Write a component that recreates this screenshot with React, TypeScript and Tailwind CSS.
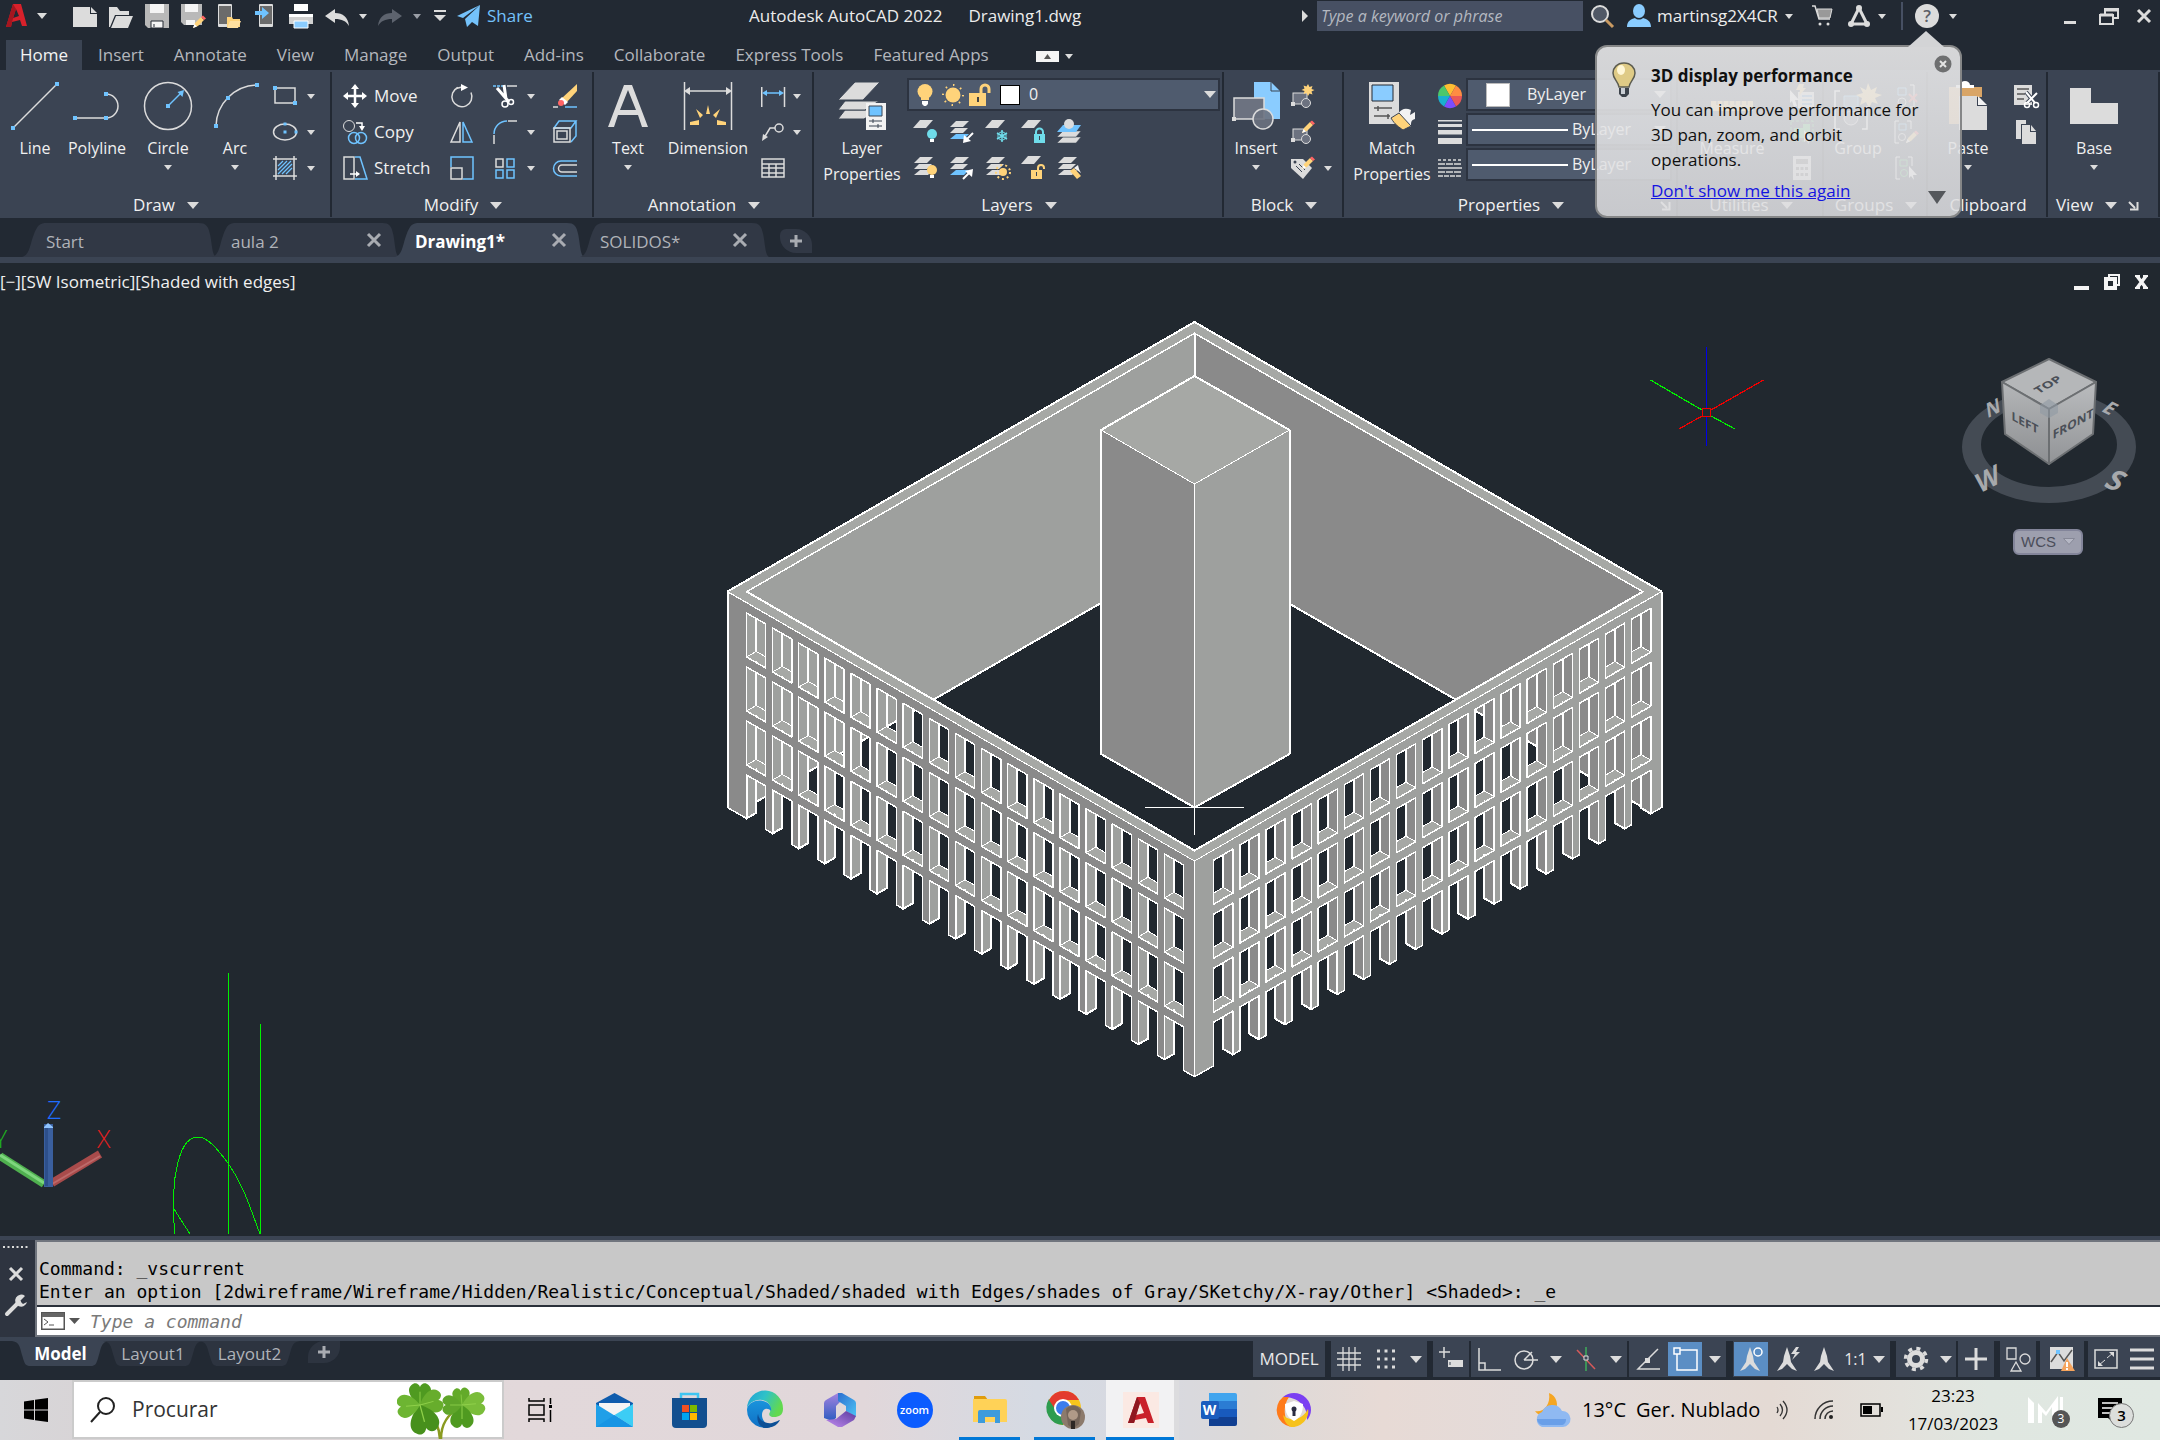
import React from "react";

type Kids = { children?: React.ReactNode };

const W = "#dcdcdc";
const B = "#6fc3ff";
const Y = "#ffd37a";
const C = "#6fdcea";

function Svg({ w = 24, h = 24, vb, label, children }: Kids & { w?: number; h?: number; vb?: string; label?: string }) {
  return (
    <svg width={w} height={h} viewBox={vb ?? `0 0 ${w} ${h}`} fill="none" className="block shrink-0 overflow-visible" aria-label={label} aria-hidden={label ? undefined : true}>
      {children}
    </svg>
  );
}

const Caret = () => (
  <Svg w={8} h={5}>
    <path d="M0 0h8L4 5z" fill={W} />
  </Svg>
);
const CaretLg = () => (
  <Svg w={12} h={7}>
    <path d="M0 0h12L6 7z" fill={W} />
  </Svg>
);

/* ---------- ribbon building blocks ---------- */

function Panel({ className, label, arrow = true, corner = false, children }: Kids & { className: string; label: string; arrow?: boolean; corner?: boolean }) {
  return (
    <section className={`relative flex shrink-0 flex-col pt-2 ${className}`}>
      <div className="flex h-[108px]">{children}</div>
      <div className="flex h-8 items-center justify-center gap-3 pt-1.5">
        <button className="flex items-center gap-[12px] text-[17px] leading-6">
          {label}
          {arrow && <CaretLg />}
        </button>
        {corner && (
          <button aria-label={`${label} settings`} className={label === "Properties" ? "absolute right-2" : "mr-3.5"}>
            <Corner />
          </button>
        )}
      </div>
      <div className="absolute top-0.5 right-0 bottom-px w-0.5 bg-[#222933]" />
    </section>
  );
}

const Corner = () => (
  <Svg w={9} h={9}>
    <path d="M0 1l6 6M8.500 1v7.500H1" stroke={W} strokeWidth="2" />
  </Svg>
);

function Big({ className, label, icon, arrow = false }: { className: string; label: string; icon: React.ReactNode; arrow?: boolean }) {
  return (
    <button className={`flex shrink-0 flex-col items-center pt-1 ${className}`}>
      <span className="flex h-[48px] items-center justify-center">{icon}</span>
      <span className="mt-[5px] text-[16px] leading-[26px]">{label}</span>
      {arrow && (
        <span className="mt-1">
          <Caret />
        </span>
      )}
    </button>
  );
}

function Cell({ label, className = "justify-center", children }: Kids & { label: string; className?: string }) {
  return (
    <button aria-label={label} className={`flex h-9 items-center ${className}`}>
      {children}
    </button>
  );
}

const Sq = ({ x, y, s = 4 }: { x: number; y: number; s?: number }) => <rect x={x - s / 2} y={y - s / 2} width={s} height={s} fill={B} />;

/* ---------- layer icons ---------- */

const Sheet = ({ y, c = W }: { y: number; c?: string }) => <path d={`M7 ${y}h13l-7 8H0z`} fill={c} />;
const Stack = ({ c3 = W }: { c3?: string }) => (
  <>
    <path d="M7 15h13l-5 5H1z" fill={c3} />
    <path d="M6 9h13l-5 5H1z" fill={W} />
    <path d="M7 2h13l-6 6H1z" fill={W} />
  </>
);
const MiniBulb = ({ c }: { c: string }) => (
  <>
    <circle cx="19" cy="15" r="5" fill={c} />
    <path d="M17 20h4v3h-4z" fill="#fff" />
  </>
);

function Pencil({ x, y }: { x: number; y: number }) {
  return (
    <g transform={`translate(${x} ${y})`}>
      <path d="M0 12l2-5 6-6 3 3-6 6z" fill={Y} />
      <path d="M0 12l1.500-4 2.500 2.500z" fill="#fff" />
      <path d="M8 1l2-1.500 3 3L11 4z" fill="#ff6464" />
    </g>
  );
}

const SmallBlock = () => (
  <>
    <rect x="2" y="9" width="14" height="11" fill="#6c7280" stroke={W} />
    <rect x="0" y="18" width="4" height="4" fill={W} />
    <circle cx="15" cy="19" r="4.500" fill="#6c7280" stroke={W} />
  </>
);

/* ---------- title bar ---------- */

function TitleButton({ label, className = "w-9", children }: Kids & { label: string; className?: string }) {
  return (
    <button aria-label={label} className={`flex h-8 shrink-0 items-center justify-center ${className}`}>
      {children}
    </button>
  );
}

function TitleBar() {
  return (
    <header className="flex h-8 items-center bg-[#222933] text-[17px] text-[#ececec]">
      <div className="flex w-[749px] shrink-0 items-center">
        <TitleButton label="Application menu" className="w-[34px]">
          <Svg w={22} h={26}>
            <path d="M7 1h8l6 22h-5l-2-6-8 2-1 5H0z" fill="#d8212b" />
            <path d="M10 6l-3 9 6-2z" fill="#222933" />
            <path d="M7 1l3 5-4 13-1 5H0z" fill="#a5161f" />
          </Svg>
        </TitleButton>
        <TitleButton label="Menu options" className="mr-[18px] w-[15px]">
          <Svg w={10} h={6}>
            <path d="M0 0h10L5 6z" fill={W} />
          </Svg>
        </TitleButton>
        <TitleButton label="New">
          <Svg>
            <path d="M0 3h17v7h7v13H0z" fill={W} />
            <path d="M18 3l6 6h-6z" fill={W} />
          </Svg>
        </TitleButton>
        <TitleButton label="Open">
          <Svg>
            <path d="M0 3h8l3 4h9v4H6L1 23H0z" fill={W} />
            <path d="M7 12h17l-5 12H2z" fill={W} />
          </Svg>
        </TitleButton>
        <TitleButton label="Save">
          <Svg>
            <path d="M0 0h24v24H3l-3-3z" fill="#b9b9b9" />
            <path d="M5 0h14v9H5zM6 17h12v7H6z" fill="#f4f4f4" />
            <path d="M6 17h12v7H6zM9 20v3" stroke="#222933" />
          </Svg>
        </TitleButton>
        <TitleButton label="Save as">
          <Svg>
            <path d="M0 0h21v21H3l-3-3z" fill="#b9b9b9" />
            <path d="M4 0h13v8H4zM5 16h9v5H5z" fill="#f4f4f4" />
            <Pencil x={12} y={12} />
          </Svg>
        </TitleButton>
        <TitleButton label="Open from web">
          <Svg>
            <rect x="1" y="0" width="14" height="23" rx="1" fill={W} />
            <rect x="2" y="2" width="12" height="18" fill="#6b6b6b" />
            <path d="M10 13h5l1 2h7v8H10z" fill={Y} />
            <path d="M13 17h11l-3 7H10z" fill="#ffe0a0" />
          </Svg>
        </TitleButton>
        <TitleButton label="Save to web">
          <Svg>
            <rect x="6" y="0" width="14" height="23" rx="1" fill={W} />
            <rect x="7" y="2" width="12" height="18" fill="#6b6b6b" />
            <path d="M2 7h7V3l7 6-7 6v-4H2z" fill={B} />
          </Svg>
        </TitleButton>
        <TitleButton label="Plot">
          <Svg>
            <path d="M5 0h14v7H5zM0 10h24v10H0z" fill="#fff" />
            <path d="M0 13h24v7H0z" fill="#d0d0d0" />
            <path d="M5 17h14v7H5z" fill="#8accff" stroke="#fff" />
          </Svg>
        </TitleButton>
        <TitleButton label="Undo">
          <Svg>
            <path d="M0 12l10-7v4c8 0 13 4 14 13-3-5-7-7-14-7v4z" fill={W} />
          </Svg>
        </TitleButton>
        <TitleButton label="Undo list" className="w-4">
          <Caret />
        </TitleButton>
        <TitleButton label="Redo" className="w-[38px]">
          <Svg>
            <path d="M24 12L14 5v4C6 9 1 13 0 22c3-5 7-7 14-7v4z" fill="#5d636e" />
          </Svg>
        </TitleButton>
        <TitleButton label="Redo list" className="w-4">
          <Svg w={8} h={5}>
            <path d="M0 0h8L4 5z" fill="#9a9ea6" />
          </Svg>
        </TitleButton>
        <TitleButton label="Customize toolbar" className="w-[30px]">
          <Svg w={12} h={12}>
            <path d="M0 0h12v2H0zM0 5h12l-6 6z" fill={W} />
          </Svg>
        </TitleButton>
        <button className="ml-0.5 flex items-center gap-1.5 text-[#74c2fb]">
          <Svg>
            <path d="M0 12L23 1 6 14zM8 15L23 1l-2 21-6-4-5 5z" fill="#74c2fb" />
          </Svg>
          Share
        </button>
      </div>
      <h1 className="flex-1 whitespace-pre">
        Autodesk AutoCAD 2022<span className="ml-[26px]">Drawing1.dwg</span>
      </h1>
      <div className="flex shrink-0 items-center">
        <TitleButton label="Expand search" className="w-6">
          <Svg w={6} h={12}>
            <path d="M0 0l6 6-6 6z" fill={W} />
          </Svg>
        </TitleButton>
        <input aria-label="Search help" placeholder="Type a keyword or phrase" className="h-[30px] w-[266px] bg-[#475063] px-1 text-[16px] italic outline-none placeholder:text-[#b4b8c0]" />
        <TitleButton label="Search" className="w-[38px]">
          <Svg>
            <circle cx="10" cy="10" r="8" fill="#505866" stroke={W} strokeWidth="2" />
            <path d="M16 16l7 7" stroke="#c99a62" strokeWidth="3" />
          </Svg>
        </TitleButton>
        <button className="flex h-8 items-center text-[17px]">
          <span className="flex w-9 justify-center">
            <Svg>
              <ellipse cx="12" cy="7" rx="6" ry="7" fill="#8accff" />
              <path d="M0 23c0-6 4-8 8-9 2 2 6 2 8 0 4 1 8 3 8 9z" fill="#8accff" />
            </Svg>
          </span>
          <span className="w-[128px] text-left text-[17px]">martinsg2X4CR</span>
          <Caret />
        </button>
        <TitleButton label="App store" className="ml-1 w-[50px]">
          <Svg w={20} h={20}>
            <path d="M0 0h3l4 13h11" stroke={W} strokeWidth="1.500" />
            <path d="M5 3h15l-2 9H7z" fill="#999" stroke={W} />
            <circle cx="8" cy="18" r="1.500" fill={W} />
            <circle cx="16" cy="18" r="1.500" fill={W} />
          </Svg>
        </TitleButton>
        <TitleButton label="Autodesk apps" className="w-6">
          <Svg>
            <path d="M12 4L4 20h16z" stroke={W} strokeWidth="3" strokeLinejoin="round" />
            <circle cx="12" cy="4" r="3" fill={W} />
            <circle cx="4" cy="20" r="3" fill={W} />
            <circle cx="20" cy="20" r="3" fill={W} />
          </Svg>
        </TitleButton>
        <TitleButton label="Apps list" className="w-[22px]">
          <Caret />
        </TitleButton>
        <div className="mr-3 ml-2 h-7 w-0.5 bg-[#475063]" />
        <TitleButton label="Help" className="w-6">
          <span className="flex h-6 w-6 items-center justify-center rounded-full bg-[#dcdcdc] text-[17px] leading-6 font-semibold text-[#5c6068]">?</span>
        </TitleButton>
        <TitleButton label="Help list" className="mr-[83px] w-7">
          <Caret />
        </TitleButton>
        <TitleButton label="Minimize" className="w-10">
          <Svg w={14} h={16}>
            <path d="M1 13h12v3H1z" fill={W} />
          </Svg>
        </TitleButton>
        <TitleButton label="Restore" className="w-[38px]">
          <Svg w={20} h={17}>
            <path d="M6 6V1h13v9h-5M1 7h13v9H1z" stroke={W} strokeWidth="2" />
            <path d="M5 2h14M1 7h13" stroke={W} strokeWidth="3" />
          </Svg>
        </TitleButton>
        <TitleButton label="Close" className="w-8">
          <Svg w={16} h={16}>
            <path d="M2 2l12 12M14 2L2 14" stroke={W} strokeWidth="3" />
          </Svg>
        </TitleButton>
      </div>
    </header>
  );
}

function RibbonTabs() {
  const tabs = ["Insert", "Annotate", "View", "Manage", "Output", "Add-ins", "Collaborate", "Express Tools", "Featured Apps"];
  return (
    <nav className="flex h-[38px] items-end bg-[#222933] pl-1.5 text-[17px] text-[#b4b7bd]">
      <button className="h-[30px] w-[76px] bg-[#3b4453] text-[#f4f4f4]">Home</button>
      {tabs.map((t) => (
        <button key={t} className="ml-0.5 h-[30px] px-[14px]">
          {t}
        </button>
      ))}
      <button aria-label="Collapse ribbon" className="mb-2 ml-[33px] flex items-center gap-1.5">
        <Svg w={23} h={11}>
          <path d="M0 0h23v11H0z" fill="#f4f4f4" />
          <path d="M8 8h7l-3.500-5z" fill="#555" />
        </Svg>
        <Caret />
      </button>
    </nav>
  );
}

/* ---------- ribbon ---------- */

function LayerIcon({ kind }: { kind: number }) {
  switch (kind) {
    case 0:
      return (
        <Svg>
          <Sheet y={1} />
          <MiniBulb c={C} />
        </Svg>
      );
    case 1:
      return (
        <Svg>
          <Stack c3={B} />
          <path d="M24 14l-7 7" stroke="#fff" strokeWidth="2" />
          <path d="M14 24l1-8 7 6z" fill="#fff" />
        </Svg>
      );
    case 2:
      return (
        <Svg>
          <Sheet y={1} />
          <path d="M17 11v12M12 14l10 6M22 14l-10 6" stroke={C} strokeWidth="1.500" />
          <path d="M17 12.500l4 2.200v4.600l-4 2.200-4-2.200v-4.600z" stroke={C} />
        </Svg>
      );
    case 3:
      return (
        <Svg>
          <Sheet y={1} />
          <path d="M15 15v-2a3 3 0 0 1 7 0v2" stroke={C} strokeWidth="2" />
          <path d="M13 15h11v9H13z" fill={C} />
          <path d="M18.500 17v4" stroke="#3b4453" />
        </Svg>
      );
    case 4:
      return (
        <Svg>
          <path d="M6 18h18l-5 6H0z" fill={W} stroke="#3b4453" strokeWidth=".5" />
          <path d="M6 12h18l-5 6H0z" fill={W} stroke="#3b4453" strokeWidth=".5" />
          <path d="M6 6h18l-5 7H0z" fill={B} />
          <circle cx="12" cy="5" r="5" fill={W} />
        </Svg>
      );
    case 5:
      return (
        <Svg>
          <Stack />
          <MiniBulb c={Y} />
        </Svg>
      );
    case 6:
      return (
        <Svg>
          <Stack c3={B} />
          <path d="M14 24l7-7" stroke="#fff" strokeWidth="2" />
          <path d="M24 14l-8 2 7 6z" fill="#fff" />
        </Svg>
      );
    case 7:
      return (
        <Svg>
          <Stack />
          <circle cx="18" cy="17" r="7" stroke={Y} strokeWidth="2" strokeDasharray="2 3" />
          <circle cx="18" cy="17" r="4" fill={Y} />
        </Svg>
      );
    case 8:
      return (
        <Svg>
          <Sheet y={1} />
          <path d="M17 15v-2a3 3 0 0 1 6 0v1" stroke={Y} strokeWidth="2" />
          <path d="M10 15h11v9H10z" fill={Y} />
          <path d="M15.500 17v4" stroke="#3b4453" />
        </Svg>
      );
    default:
      return (
        <Svg>
          <Stack />
          <path d="M13 16l4-3 7 8-4 3z" fill={Y} />
          <path d="M17 13l4-3 1 4 2 4z" fill="#f2f2f2" />
        </Svg>
      );
  }
}

const layerNames = ["Off", "Isolate", "Freeze", "Lock", "Make current", "Turn all on", "Unisolate", "Thaw all", "Unlock", "Match layer"];

function Combo({ label, value, pad, children }: Kids & { label: string; value: string; pad: string }) {
  return (
    <div className="relative h-[33px] border-2 border-[#2c3340] bg-[#4f5b6e]">
      <select aria-label={label} className={`block h-[28px] w-full appearance-none text-[16px] text-[#f0f0f0] outline-none ${pad}`}>
        <option>{value}</option>
      </select>
      <div className="pointer-events-none absolute inset-0 flex items-center">{children}</div>
    </div>
  );
}

function Ribbon() {
  return (
    <div className="flex bg-[#3b4453] text-[#f0f0f0]">
      <Panel className="w-[332px]" label="Draw">
        <Big
          className="ml-[7px] w-14"
          label="Line"
          icon={
            <Svg w={48} h={48}>
              <path d="M2 46L46 2" stroke={W} strokeWidth="1.500" />
              <Sq x={2} y={46} />
              <Sq x={46} y={2} />
            </Svg>
          }
        />
        <Big
          className="w-[68px]"
          label="Polyline"
          icon={
            <Svg w={48} h={48}>
              <path d="M2 36h31a12 12 0 0 0 0-24" stroke={W} strokeWidth="1.500" />
              <Sq x={2} y={36} />
              <Sq x={33} y={36} />
              <Sq x={33} y={12} />
            </Svg>
          }
        />
        <Big
          className="w-[74px]"
          label="Circle"
          arrow
          icon={
            <Svg w={48} h={48}>
              <circle cx="24" cy="24" r="23.500" stroke={W} strokeWidth="1.500" />
              <path d="M24 24L38 10" stroke={B} strokeWidth="1.500" />
              <path d="M40 8l-1.500 7-5-5z" fill={B} />
              <Sq x={24} y={24} />
            </Svg>
          }
        />
        <Big
          className="w-[60px]"
          label="Arc"
          arrow
          icon={
            <Svg w={48} h={48}>
              <path d="M5 44A42 42 0 0 1 46 3" stroke={W} strokeWidth="1.500" />
              <Sq x={5} y={44} />
              <Sq x={17} y={16} />
              <Sq x={46} y={3} />
            </Svg>
          }
        />
        <div className="ml-2 grid w-[42px] grid-cols-[24px_18px]">
          <Cell label="Rectangle" className="justify-start">
            <Svg>
              <path d="M2 4h20v15H2z" stroke={W} strokeWidth="1.500" />
              <Sq x={2} y={4} />
              <Sq x={22} y={19} />
            </Svg>
          </Cell>
          <Cell label="Rectangle options" className="justify-end">
            <Caret />
          </Cell>
          <Cell label="Ellipse" className="justify-start">
            <Svg>
              <ellipse cx="12" cy="12" rx="11.500" ry="8" stroke={W} strokeWidth="1.500" />
              <Sq x={12} y={4} s={3} />
              <Sq x={12} y={12} s={3} />
              <Sq x={23} y={12} s={3} />
            </Svg>
          </Cell>
          <Cell label="Ellipse options" className="justify-end">
            <Caret />
          </Cell>
          <Cell label="Hatch" className="justify-start">
            <Svg>
              <path d="M3 0v24M21 0v24M0 3h24M0 20h24" stroke={W} strokeWidth="1.500" />
              <path d="M5 10l5-5M5 14l9-9M5 18l13-13M9 18l10-10M13 18l6-6" stroke={B} strokeWidth="1.300" />
            </Svg>
          </Cell>
          <Cell label="Hatch options" className="justify-end">
            <Caret />
          </Cell>
        </div>
      </Panel>

      <Panel className="w-[262px]" label="Modify">
        <div className="grid grid-cols-[108px_37px_41px_12px_55px] pl-[7px] text-[17px]">
          <Cell label="Move" className="gap-[7px] pl-1">
            <Svg>
              <path d="M12 3v18M3 12h18" stroke="#fff" strokeWidth="2.500" />
              <path d="M12 0l4 5H8zM12 24l4-5H8zM0 12l5-4v8zM24 12l-5-4v8z" fill="#fff" />
            </Svg>
            Move
          </Cell>
          <Cell label="Rotate" className="justify-start pl-[3px]">
            <Svg>
              <path d="M8 3.500a10 10 0 1 0 13 5" stroke={W} strokeWidth="1.500" />
              <path d="M6 4.500l6-1.500" stroke={W} strokeWidth="1.500" />
              <path d="M11 0l7 3.500L11 7z" fill="#fff" />
            </Svg>
          </Cell>
          <Cell label="Trim">
            <Svg>
              <path d="M0 2h10" stroke={B} strokeWidth="1.500" strokeDasharray="3 1" />
              <path d="M14 2h10" stroke={W} strokeWidth="1.500" />
              <path d="M11 1l2 14M4 4l12 14" stroke="#fff" strokeWidth="3" />
              <circle cx="12" cy="20" r="3" stroke="#fff" strokeWidth="1.500" />
              <circle cx="18" cy="18" r="2.500" stroke="#fff" strokeWidth="1.500" />
            </Svg>
          </Cell>
          <Cell label="Trim options">
            <Caret />
          </Cell>
          <Cell label="Erase">
            <Svg>
              <path d="M0 23h5" stroke={W} strokeWidth="1.500" />
              <path d="M12 23h12" stroke={B} strokeWidth="1.500" />
              <path d="M24 0v7L13 19l-5-4z" fill={Y} />
              <path d="M9 13l6 5-3 3-6-5z" fill="#fff" />
              <circle cx="8" cy="19" r="3" fill="#ff6464" />
            </Svg>
          </Cell>

          <Cell label="Copy" className="gap-[7px] pl-1">
            <Svg>
              <circle cx="6" cy="6" r="5.500" stroke={W} />
              <circle cx="11" cy="18" r="5.500" stroke={B} strokeWidth="1.500" />
              <circle cx="18" cy="18" r="5.500" stroke={B} strokeWidth="1.500" />
              <path d="M13 3h6v5" stroke="#fff" strokeWidth="1.500" />
              <path d="M16 6h6l-3 5z" fill="#fff" />
            </Svg>
            Copy
          </Cell>
          <Cell label="Mirror" className="justify-start pl-[3px]">
            <Svg>
              <path d="M10 2v20H1z" stroke={W} strokeWidth="1.500" />
              <path d="M13 2v20h9z" stroke={B} strokeWidth="1.500" />
            </Svg>
          </Cell>
          <Cell label="Fillet">
            <Svg>
              <path d="M15 1h9M1 15v9" stroke={W} strokeWidth="1.500" />
              <path d="M1 14A13 13 0 0 1 14 1" stroke={B} strokeWidth="1.500" />
            </Svg>
          </Cell>
          <Cell label="Fillet options">
            <Caret />
          </Cell>
          <Cell label="Explode">
            <Svg>
              <path d="M1 8l5-7h17l-5 7zM23 1v15l-5 6" stroke={B} strokeWidth="1.500" />
              <path d="M1 8h16v14H1zM4 11h10v8H4z" stroke={W} strokeWidth="1.500" />
            </Svg>
          </Cell>

          <Cell label="Stretch" className="gap-[7px] pl-1">
            <Svg>
              <path d="M1 1h10v22H1z" stroke={W} strokeWidth="1.500" />
              <path d="M12 1h5l7 22H12" stroke={B} strokeWidth="1.500" />
              <path d="M7 18h9" stroke="#fff" strokeWidth="1.500" />
              <path d="M13 15l4 3-4 3z" fill="#fff" />
            </Svg>
            Stretch
          </Cell>
          <Cell label="Scale" className="justify-start pl-[3px]">
            <Svg>
              <path d="M1 11V1h22v22H13" stroke={B} strokeWidth="1.500" />
              <path d="M1 12h11v11H1z" stroke={W} strokeWidth="1.500" />
            </Svg>
          </Cell>
          <Cell label="Array">
            <Svg>
              <path d="M3 3h7v8H3z" stroke={W} strokeWidth="1.500" />
              <path d="M14 3h7v8h-7zM3 14h7v8H3zM14 14h7v8h-7z" stroke={B} strokeWidth="1.500" />
            </Svg>
          </Cell>
          <Cell label="Array options">
            <Caret />
          </Cell>
          <Cell label="Offset">
            <Svg>
              <path d="M24 5H8a7 7 0 0 0 0 15h16" stroke={B} strokeWidth="1.500" />
              <path d="M24 9H9a3.500 3.500 0 0 0 0 7h15" stroke={W} strokeWidth="1.500" />
            </Svg>
          </Cell>
        </div>
      </Panel>

      <Panel className="w-[220px]" label="Annotation">
        <Big
          className="ml-1 w-[60px]"
          label="Text"
          arrow
          icon={
            <Svg w={40} h={44}>
              <path d="M0 43L16 1h8l16 42h-6l-4-12H10L6 43zM12 26h16L20 6z" fill={W} />
            </Svg>
          }
        />
        <Big
          className="w-[100px]"
          label="Dimension"
          icon={
            <Svg w={48} h={48}>
              <path d="M.500 0v48M47.500 0v48M3 9h42" stroke={W} strokeWidth="1.500" />
              <path d="M0 9l6-4v8zM48 9l-6-4v8z" fill={W} />
              <path d="M24 23l2 9h-4zM12 27l7 6-3 3zM36 27l-7 6 3 3zM6 40l9-2v5H6zM42 40l-9-2v5h9z" fill={Y} />
            </Svg>
          }
        />
        <div className="ml-[3px] grid w-[40px] grid-cols-[24px_16px]">
          <Cell label="Linear dimension" className="justify-start">
            <Svg>
              <path d="M.750 3v20M23.500 3v20" stroke={W} strokeWidth="1.500" />
              <path d="M3 9h18" stroke={B} strokeWidth="1.500" />
              <path d="M1 9l5-3v6zM23 9l-5-3v6z" fill={B} />
            </Svg>
          </Cell>
          <Cell label="Dimension options" className="justify-end">
            <Caret />
          </Cell>
          <Cell label="Leader" className="justify-start">
            <Svg>
              <circle cx="18" cy="8" r="4" stroke={W} strokeWidth="1.500" />
              <path d="M14 8H9L3 18" stroke={W} strokeWidth="1.500" />
              <path d="M1 21l1-7 5 3z" fill={W} />
            </Svg>
          </Cell>
          <Cell label="Leader options" className="justify-end">
            <Caret />
          </Cell>
          <Cell label="Table" className="justify-start">
            <Svg>
              <path d="M1 3h22v18H1zM1 8h22M1 12h22M1 17h22M8 8v13M15 8v13" stroke={W} strokeWidth="1.500" />
            </Svg>
          </Cell>
        </div>
      </Panel>

      <Panel className="w-[410px]" label="Layers">
        <Big
          className="ml-1 w-[88px]"
          label="Layer Properties"
          icon={
            <Svg w={48} h={48}>
              <path d="M7 28h34L26 37H0z" fill={W} stroke="#3b4453" />
              <path d="M7 19h34L27 28H0z" fill={W} stroke="#3b4453" />
              <path d="M17 0h25L25 18H0z" fill={W} stroke="#3b4453" />
              <path d="M28 21h20v27H28z" fill="#f2f2f2" />
              <path d="M31 24h13v10H31z" fill={B} stroke="#3b4453" />
              <path d="M31 39h13M31 44h13M35 37v4M40 42v4" stroke="#3b4453" />
            </Svg>
          }
        />
        <div className="ml-px flex-1 pr-1">
          <Combo label="Current layer" value="0" pad="pl-[120px]">
            <div className="flex w-full items-center pr-0.5 pl-2">
              <Svg w={16} h={22}>
                <circle cx="8" cy="7.500" r="7.500" fill={Y} />
                <path d="M4 13h8v3H4z" fill={Y} />
                <path d="M5 17h6v3l-2 2H7l-2-2z" fill="#fff" />
              </Svg>
              <span className="ml-2">
                <Svg w={24} h={22}>
                  <circle cx="12" cy="11" r="7.500" fill={Y} />
                  <circle cx="12" cy="11" r="10" stroke={Y} strokeWidth="2" strokeDasharray="1.500 6.300" />
                </Svg>
              </span>
              <span className="ml-1">
                <Svg w={22} h={22}>
                  <path d="M12 9V5a4 4 0 0 1 8 0v4" stroke={Y} strokeWidth="3" />
                  <path d="M0 9h17v13H0z" fill={Y} />
                  <path d="M9 13v5" stroke="#444" strokeWidth="2" />
                </Svg>
              </span>
              <span className="ml-[9px] h-5 w-5 border border-black bg-white" />
              <span className="ml-auto">
                <CaretLg />
              </span>
            </div>
          </Combo>
          <div className="mt-[2px] grid w-[180px] grid-cols-5">
            {layerNames.map((n, i) => (
              <Cell key={n} label={n}>
                <LayerIcon kind={i} />
              </Cell>
            ))}
          </div>
        </div>
      </Panel>

      <Panel className="w-[120px]" label="Block">
        <Big
          className="ml-1 w-14"
          label="Insert"
          arrow
          icon={
            <Svg w={48} h={48}>
              <path d="M22 0h17l9 9v28H22z" fill="#8accff" />
              <path d="M39 0v9h9" stroke="#3b4453" />
              <path d="M2 16h30v21H2z" fill="#6c7280" stroke={W} strokeWidth="1.500" />
              <path d="M0 35h4v4H0z" fill={W} />
              <circle cx="31" cy="37" r="10" fill="#6c7280" fillOpacity=".9" stroke={W} strokeWidth="1.500" />
            </Svg>
          }
        />
        <div className="ml-1.5 grid w-[42px] grid-cols-[25px_17px]">
          <Cell label="Create block">
            <Svg>
              <SmallBlock />
              <path d="M17 0l1.500 3 3-1-1 3 3 1-3 1.500 1 3-3-1L17 12l-1.500-3-3 1 1-3-3-1 3-1.500-1-3 3 1z" fill={Y} />
            </Svg>
          </Cell>
          <span />
          <Cell label="Edit block">
            <Svg>
              <SmallBlock />
              <Pencil x={11} y={1} />
            </Svg>
          </Cell>
          <span />
          <Cell label="Edit attributes">
            <Svg>
              <path d="M0 3h12l9 9-9 11L0 12z" fill={W} />
              <path d="M5 10l6 6M8 8l6 6" stroke="#3b4453" />
              <circle cx="4" cy="6" r="1.500" fill="#3b4453" />
              <Pencil x={11} y={1} />
            </Svg>
          </Cell>
          <Cell label="Attribute options" className="justify-end">
            <Caret />
          </Cell>
        </div>
      </Panel>

      <Panel className="w-[334px]" label="Properties" corner>
        <Big
          className="ml-1 w-[88px]"
          label="Match Properties"
          icon={
            <Svg w={48} h={48}>
              <path d="M1 0h30v42H1z" fill={W} />
              <path d="M4 3h21v16H4z" fill="#8accff" stroke="#222933" />
              <path d="M6 26h18M6 34h16M10 24v5M20 32v5" stroke="#555" strokeWidth="1.500" />
              <path d="M30 32c4-6 8-6 13-4l-1 5 5-3v7c-4 1-4 3-4 8l-6-1z" fill="#f2f2f2" />
              <path d="M23 36l8-5 12 13-8 4c-4-3-8-5-12-12z" fill={Y} stroke="#3b4453" />
            </Svg>
          }
        />
        <div className="flex w-[30px] flex-col">
          <Cell label="Object color" className="justify-end pr-1">
            <Svg>
              <path d="M12 12L6 1.600A12 12 0 0 1 18 1.600z" fill="#ffbe32" />
              <path d="M12 12L18 1.600A12 12 0 0 1 24 12z" fill="#ff8c42" />
              <path d="M12 12h12a12 12 0 0 1-6 10.400z" fill="#eb5757" />
              <path d="M12 12l6 10.400a12 12 0 0 1-12 0z" fill="#7c4dff" />
              <path d="M12 12L6 22.400A12 12 0 0 1 0 12z" fill="#1bb0ce" />
              <path d="M12 12H0A12 12 0 0 1 6 1.600z" fill="#4cc76a" />
            </Svg>
          </Cell>
          <Cell label="Lineweight" className="justify-end pr-1">
            <Svg>
              <path d="M0 0h24v1.500H0zM0 4h24v3H0zM0 10h24v4.500H0zM0 18h24v6H0z" fill={W} />
            </Svg>
          </Cell>
          <Cell label="Linetype" className="justify-end pr-1">
            <Svg>
              <path d="M0 4h24" stroke={W} strokeWidth="1.500" strokeDasharray="3 2" />
              <path d="M0 8h24M0 16h24" stroke={W} strokeWidth="1.500" strokeDasharray="7 1" />
              <path d="M0 12h24" stroke={W} strokeWidth="1.500" />
              <path d="M0 20h24" stroke={W} strokeWidth="1.500" strokeDasharray="5 1" />
            </Svg>
          </Cell>
        </div>
        <div className="flex flex-1 flex-col gap-0.5 pr-1.5">
          <Combo label="Color" value="ByLayer" pad="pl-[59px]">
            <span className="ml-[18px] h-6 w-6 border border-[#bbb] bg-white" />
            <span className="mr-1 ml-auto">
              <CaretLg />
            </span>
          </Combo>
          <Combo label="Line weight" value="ByLayer" pad="pl-[104px]">
            <span className="ml-1 h-0.5 w-24 bg-white" />
            <span className="mr-1 ml-auto">
              <CaretLg />
            </span>
          </Combo>
          <Combo label="Line type" value="ByLayer" pad="pl-[104px]">
            <span className="ml-1 h-0.5 w-24 bg-white" />
            <span className="mr-1 ml-auto">
              <CaretLg />
            </span>
          </Combo>
        </div>
      </Panel>

      <Panel className="w-[146px]" label="Utilities">
        <Big
          className="ml-4 w-[76px]"
          label="Measure"
          arrow
          icon={
            <Svg w={42} h={10}>
              <path d="M0 0h42v10H0z" fill={Y} />
              <path d="M6 0v4M12 0v4M18 0v4M24 0v4M30 0v4M36 0v4" stroke="#3b4453" />
            </Svg>
          }
        />
        <div className="ml-[18px] flex w-7 flex-col">
          <Cell label="Quick select">
            <Svg>
              <path d="M8 8h16v16H8z" fill={W} />
              <path d="M12 12h10M12 16h10M12 20h10" stroke="#2a7fd0" strokeWidth="1.500" />
              <path d="M9 0h5l-1 4h3l-7 8 1-6H6z" fill={Y} />
              <path d="M0 6l9 10H5l2 6-3 1-2-6-2 2z" fill="#fff" />
            </Svg>
          </Cell>
          <Cell label="Select all">
            <Svg>
              <path d="M1 1h22v20H1z" stroke="#4cc76a" strokeDasharray="3 2" />
              <path d="M4 8h9V4h7v14H4z" fill="#4cc76a" />
              <path d="M14 10l8 9h-4l1 5-3-4-2 2z" fill="#fff" />
            </Svg>
          </Cell>
          <Cell label="Calculator">
            <Svg>
              <path d="M3 0h18v24H3z" fill={W} />
              <path d="M6 3h12v5H6zM6 11h3v3H6zM10.500 11h3v3h-3zM15 11h3v3h-3zM6 17h3v3H6zM10.500 17h3v3h-3zM15 17h3v3h-3z" fill="#666" />
            </Svg>
          </Cell>
        </div>
      </Panel>

      <Panel className="w-[104px]" label="Groups">
        <Big
          className="ml-1 w-[60px]"
          label="Group"
          icon={
            <Svg w={48} h={48}>
              <path d="M6 9H1v38h5M28 47h5V24" stroke="#fff" strokeWidth="1.500" />
              <path d="M10 14h14v11H10z" fill="#8accff" fillOpacity=".4" stroke={B} />
              <circle cx="17" cy="36" r="7" fill="#6c7280" stroke={W} />
              <path d="M34 1l3 7 6-3-2 6 7 2-7 3 3 6-6-2-3 6-3-6-6 3 2-7-6-3 7-2-3-6 6 3z" fill={Y} />
            </Svg>
          }
        />
        <div className="ml-1 flex w-7 flex-col">
          <Cell label="Ungroup">
            <Svg>
              <path d="M16 1h4v22h-4" stroke="#fff" />
              <path d="M4 4h8v7H4z" stroke={B} />
              <circle cx="8" cy="18" r="4" stroke={W} />
              <path d="M15 10l8 8M23 10l-8 8" stroke="#eb5757" strokeWidth="2" />
            </Svg>
          </Cell>
          <Cell label="Group edit">
            <Svg>
              <path d="M5 1H1v22h4M13 1h4v8" stroke="#fff" />
              <path d="M5 4h7v6H5z" stroke={B} />
              <circle cx="8" cy="17" r="3.500" stroke={W} />
              <Pencil x={12} y={11} />
            </Svg>
          </Cell>
          <Cell label="Group selection">
            <Svg>
              <path d="M6 1H2v22h4M14 1h4v9" stroke="#fff" />
              <path d="M6 4h7v6H6z" stroke="#4cc76a" />
              <circle cx="10" cy="17" r="3.500" stroke="#4cc76a" />
              <path d="M15 10l8 9h-4l1 5-3-4-2 2z" fill="#fff" />
            </Svg>
          </Cell>
        </div>
      </Panel>

      <Panel className="w-[120px]" label="Clipboard" arrow={false}>
        <Big
          className="ml-2.5 w-[60px]"
          label="Paste"
          arrow
          icon={
            <Svg w={38} h={48}>
              <path d="M0 5h33v10H10v27H0z" fill="#d9a566" />
              <path d="M7 6V3h4a5 4 0 0 1 10 0h4v3z" fill="#fff" />
              <path d="M10 14h18v10h10v24H10z" fill={W} />
              <path d="M29 14l9 9h-9z" fill="#f2f2f2" />
            </Svg>
          }
        />
        <div className="ml-3.5 flex w-7 flex-col">
          <Cell label="Cut">
            <Svg>
              <path d="M0 1h18v20H0z" fill={W} />
              <path d="M3 5h12M3 10h8M3 15h7" stroke="#555" strokeWidth="1.500" />
              <path d="M12 8l9 11M23 9L13 19" stroke="#3b4453" strokeWidth="4" />
              <path d="M12 8l9 11M23 9L13 19" stroke="#fff" strokeWidth="2" />
              <circle cx="13" cy="21" r="2.500" stroke="#fff" strokeWidth="1.500" />
              <circle cx="22" cy="21" r="2.500" stroke="#fff" strokeWidth="1.500" />
            </Svg>
          </Cell>
          <Cell label="Copy clip">
            <Svg>
              <path d="M2 0h10v4H7v15H2z" fill={W} />
              <path d="M8 5h8v7h6v12H8z" fill={W} />
              <path d="M17 5l5 6h-5z" fill={W} />
            </Svg>
          </Cell>
        </div>
      </Panel>

      <Panel className="min-w-0 flex-1" label="View" corner>
        <Big
          className="ml-4 w-[60px]"
          label="Base"
          arrow
          icon={
            <Svg w={48} h={36}>
              <path d="M0 0h21v15h27v21H0z" fill={W} />
            </Svg>
          }
        />
      </Panel>
    </div>
  );
}

/* ---------- notification ---------- */

function Balloon() {
  return (
    <aside className="absolute top-[45px] right-[198px] z-10 w-[367px] rounded-xl border-2 border-[#858687] bg-linear-to-b from-[#e9e9eae6] to-[#dedee0dc] pt-4 pr-2 pb-3 pl-[54px] text-[17px] text-[#101010]">
      <div className="absolute -top-4 right-4">
        <Svg w={36} h={16}>
          <path d="M0 16L18 0l18 16z" fill="#d3d4d6" />
        </Svg>
      </div>
      <div className="absolute top-[15px] left-[15px]">
        <Svg w={24} h={36}>
          <path d="M12 1C5 1 1 6 1 11c0 6 5 8 6 14h10c1-6 6-8 6-14 0-5-4-10-11-10z" fill="#dfcb86" stroke="#5c5c50" strokeWidth="1.500" />
          <ellipse cx="9" cy="8" rx="4" ry="5" fill="#fff7d6" />
          <path d="M7 26h10v6l-3 3h-4l-3-3z" fill="#3c434b" />
          <path d="M9 26h4v6H9z" fill="#c9ced4" />
        </Svg>
      </div>
      <button aria-label="Close notification" className="absolute top-2 right-2">
        <Svg w={18} h={18}>
          <circle cx="9" cy="9" r="8.500" fill="#6e6f70" />
          <path d="M6 6l6 6M12 6l-6 6" stroke="#e4e4e4" strokeWidth="2" />
        </Svg>
      </button>
      <h2 className="leading-[26px] font-bold">3D display performance</h2>
      <p className="mt-2 leading-[25px]">
        You can improve performance for
        <br />
        3D pan, zoom, and orbit
        <br />
        operations.
      </p>
      <a href="#dismiss" className="mt-1.5 inline-block leading-[26px] text-[#1414e0] underline">
        Don't show me this again
      </a>
      <button aria-label="More" className="absolute right-3.5 bottom-3">
        <Svg w={18} h={13}>
          <path d="M0 0h18L9 13z" fill="#55585c" />
        </Svg>
      </button>
    </aside>
  );
}

/* ---------- file tabs ---------- */

const CloseX = ({ c = "#a9acb2" }: { c?: string }) => (
  <Svg w={14} h={14}>
    <path d="M1 1l12 12M13 1L1 13" stroke={c} strokeWidth="3" />
  </Svg>
);

function TabShape({ fill }: { fill: string }) {
  return (
    <svg viewBox="0 0 100 34" preserveAspectRatio="none" className="absolute inset-0 h-full w-full" aria-hidden="true">
      <path d="M0 34C4 32 4 22 6 12C8 2 9 0 13 0H91C95 0 96 3 97 12C98 22 98 32 100 34z" fill={fill} />
    </svg>
  );
}

function FileTab({ name, className, active = false, closable = true }: { name: string; className: string; active?: boolean; closable?: boolean }) {
  return (
    <div className={`relative flex h-[34px] shrink-0 items-center ${className}`}>
      <TabShape fill={active ? "#3b4453" : "#313845"} />
      <button className={`relative flex-1 pt-1 text-left text-[17px] ${active ? "font-bold text-white" : "text-[#b0b3b9]"}`}>{name}</button>
      {closable && (
        <button aria-label={`Close ${name}`} className="relative">
          <CloseX />
        </button>
      )}
    </div>
  );
}

function FileTabs() {
  return (
    <nav className="flex h-[45px] items-end border-b-[6px] border-[#3b4453] bg-[#222933] pl-[22px]">
      <FileTab name="Start" className="w-[194px] pl-6" closable={false} />
      <FileTab name="aula 2" className="-ml-1 w-[187px] pr-[18px] pl-[19px]" />
      <FileTab name="Drawing1*" active className="-ml-1 w-[189px] pr-[18px] pl-[20px]" />
      <FileTab name="SOLIDOS*" className="-ml-1 w-[189px] pr-[22px] pl-[20px]" />
      <button aria-label="New drawing" className="mb-1 ml-[11px] flex h-6 w-8 items-center justify-center rounded-tl-md rounded-tr-2xl rounded-bl-2xl bg-[#313845]">
        <Svg w={12} h={12}>
          <path d="M6 0v12M0 6h12" stroke="#a9acb2" strokeWidth="3" />
        </Svg>
      </button>
    </nav>
  );
}

/* ---------- model space drawing ---------- */

const K = 0.5765;
const DX = 9.7;
const DY = 5.6;
const PITCH = 26.12;
const WIN = 19.2;
const DARK = "#8a8a8a";
const LIGHT = "#9ea09e";
const TOP = "#a6a8a5";

const pts = (p: number[][]) => p.map(([x, y]) => `${x.toFixed(1)},${y.toFixed(1)}`).join(" ");

function Facade({ side }: { side: "left" | "right" }) {
  const left = side === "left";
  const x0 = left ? 727.5 : 1194.5;
  const x1 = left ? 1194.5 : 1661.5;
  const face = left ? DARK : LIGHT;
  const reveal = left ? LIGHT : DARK;
  const top = (x: number) => (left ? 591.5 + K * (x - x0) : 591.5 + K * (x1 - x));
  const first = left ? 746.5 : 1213.7;
  const cols = Array.from({ length: 17 }, (_, i) => first + i * PITCH);
  const rows = [10.5, 64.5, 118.5];
  const openTop = 172.5;
  const floor = 216;

  const quad = (a: number, b: number, t: number, h: number) => [
    [a, top(a) + t],
    [b, top(b) + t],
    [b, top(b) + t + h],
    [a, top(a) + t + h],
  ];
  const toPath = (p: number[][]) => "M" + p.map((q) => q.map((n) => n.toFixed(1)).join(" ")).join("L") + "z";

  const holes: number[][][] = [];
  const outline: number[][] = [];
  cols.forEach((a) => rows.forEach((r) => holes.push(quad(a, a + WIN, r, 44))));

  outline.push([x0, top(x0)], [x1, top(x1)], [x1, top(x1) + floor]);
  [...cols].reverse().forEach((a) => {
    const b = a + WIN;
    outline.push([b, top(b) + floor], [b, top(b) + openTop], [a, top(a) + openTop], [a, top(a) + floor]);
  });
  outline.push([x0, top(x0) + floor]);

  return (
    <g shapeRendering="crispEdges">
      {cols.map((a) => {
        const b = a + WIN;
        const e = left ? a : b;
        const back = left ? a + DX : b - DX;
        const far = left ? b : a;
        return (
          <g key={a} stroke="#fff">
            {rows.map((r) => {
              const yb = top(e) + r + 44;
              return (
                <g key={r}>
                  <polygon points={pts([[e, top(e) + r], [back, top(e) + r - DY], [back, yb - DY], [e, yb]])} fill={reveal} strokeWidth="1" />
                  <line x1={back} x2={back} y1={top(e) + r - DY + 6} y2={yb - DY} strokeWidth="2" />
                  <polygon points={pts([[e, yb], [back, yb - DY], [far, yb - DY + K * (WIN - DX)], [far, top(far) + r + 44]])} fill={TOP} strokeWidth="1" />
                </g>
              );
            })}
            <polygon
              points={pts([[e, top(e) + openTop], [back, top(e) + openTop - DY], [back, top(e) + floor - DY], [e, top(e) + floor]])}
              fill={reveal}
              strokeWidth="2"
            />
          </g>
        );
      })}
      <path d={toPath(outline) + holes.map(toPath).join("")} fill={face} fillRule="evenodd" stroke="#fff" strokeWidth="1.500" />
    </g>
  );
}

function Model() {
  return (
    <g strokeLinejoin="round">
      <g shapeRendering="crispEdges" stroke="#fff">
        <polygon points="746.5,591.5 1194.500,333 1194.500,549 746.500,807.500" fill={LIGHT} strokeWidth="2" />
        <polygon points="1643,591.5 1194.500,333 1194.500,549 1643,807.500" fill={DARK} strokeWidth="2" />
      </g>
      <g shapeRendering="crispEdges" stroke="#fff">
        <polygon points="1101,430 1194.500,484 1194.500,807.500 1101,754" fill={DARK} strokeWidth="1" />
        <polygon points="1289.500,430 1194.500,484 1194.500,807.500 1289.500,754" fill={LIGHT} strokeWidth="1" />
        <polygon points="1194.500,376 1289.500,430 1194.500,484 1101,430" fill={TOP} strokeWidth="1" />
        <polygon points="1194.500,376 1289.500,430 1289.500,754 1194.500,807.500 1101,754 1101,430" strokeWidth="2" />
      </g>
      <Facade side="left" />
      <Facade side="right" />
      <path
        d="M1194.500 322L1661.500 591.500L1194.500 861L727.500 591.500zM1194.500 333L746.500 591.500L1194.500 850.500L1643 591.500z"
        fill={TOP}
        fillRule="evenodd"
        stroke="#fff"
        strokeWidth="1"
        shapeRendering="crispEdges"
      />
      <g shapeRendering="crispEdges" stroke="#fff" strokeWidth="2">
        <path d="M727.500 591.500L1194.500 322L1661.500 591.500V807.500M727.500 591.500V807.500M746.500 591.500L1194.500 850.500L1643 591.500" />
        <path d="M1145 807h99M1194.500 770v65" strokeWidth="1" />
      </g>
    </g>
  );
}

function ViewCube() {
  return (
    <g fontFamily="Open Sans, sans-serif" fontWeight="700" textAnchor="middle">
      <path d="M1962 447a87 56 0 1 0 174 0a87 56 0 1 0-174 0zM1981 444.500a68 42.500 0 1 0 136 0a68 42.500 0 1 0-136 0z" fill="#444b54" fillRule="evenodd" />
      <g fill="#a7a9ac">
        <text transform="translate(1994 415) rotate(-28) skewX(-20)" fontSize="19">N</text>
        <text transform="translate(2105 413) rotate(26) skewX(-20)" fontSize="19">E</text>
        <text transform="translate(1990 488) rotate(-28) skewX(-14)" fontSize="26">W</text>
        <text transform="translate(2110 489) rotate(22) skewX(-14)" fontSize="29">S</text>
      </g>
      <g stroke="#6c6f72" strokeWidth="2" strokeLinejoin="round">
        <polygon points="2049,359 2096,382 2049,409 2002,382" fill="#b5b7b9" />
        <polygon points="2002,382 2049,409 2049,464 2005,434" fill="url(#cubeL)" />
        <polygon points="2096,382 2049,409 2049,464 2093,434" fill="url(#cubeR)" />
      </g>
      <path d="M2040 405l9-6 9 6v8l-9 5-9-5z" fill="#8f9aa3" opacity=".6" />
      <g fill="#4a4f57">
        <text transform="matrix(.87 -.5 .6 .5 2051 387)" fontSize="14">TOP</text>
        <text transform="translate(2025 427) skewY(28)" fontSize="12">LEFT</text>
        <text transform="translate(2073 428) skewY(-29)" fontSize="12">FRONT</text>
      </g>
      <defs>
        <linearGradient id="cubeL" x1="0" y1="0" x2="0" y2="1">
          <stop stopColor="#b4b6b8" />
          <stop offset="1" stopColor="#8d8f92" />
        </linearGradient>
        <linearGradient id="cubeR" x1="0" y1="0" x2="0" y2="1">
          <stop stopColor="#babcbe" />
          <stop offset="1" stopColor="#929497" />
        </linearGradient>
      </defs>
    </g>
  );
}

function Viewport() {
  return (
    <main className="relative min-h-[400px] flex-1 overflow-hidden bg-[#21282f]">
      <svg viewBox="0 263 2160 973" className="absolute inset-0 h-full w-full" fill="none" aria-label="Model space">
        <Model />
        <g shapeRendering="crispEdges">
          <path d="M1706.500 347v61M1706.500 417v29" stroke="#0000e8" strokeWidth="1" />
          <path d="M1650.500 380L1702 410M1711 416L1735 429" stroke="#00f000" strokeWidth="1.200" />
          <path d="M1763.500 380L1711 410M1702 416L1679 429M1702.500 408.500h8v8h-8z" stroke="#f00000" strokeWidth="1.200" />
          <path d="M228.500 973v261M260.500 1024v210M174.500 1234C173 1205 173 1185 176 1172C180 1148 188 1137 198 1137C208 1137 218 1150 228 1163C245 1188 250 1208 260 1234M174 1209L190 1234" stroke="#00f000" strokeWidth="1" />
        </g>
        <ViewCube />
        <g strokeWidth="8">
          <path d="M0 1156L44 1184" stroke="#4fb04f" />
          <path d="M0 1155L44 1183" stroke="#7ed67e" strokeWidth="3" />
          <path d="M52 1183L100 1154" stroke="#a94b4b" />
          <path d="M52 1184L100 1156" stroke="#bd6a6a" strokeWidth="2" />
          <path d="M48.500 1124v63" stroke="#3a5f9e" strokeWidth="9" />
          <path d="M46.500 1126v60" stroke="#2d4f8a" strokeWidth="3" />
          <path d="M44 1127l4-4 5 4v1h-9z" fill="#8fc4ff" />
        </g>
        <g fontFamily="Open Sans, sans-serif" fontWeight="300" fontSize="25">
          <text x="47" y="1119" fill="#1f6dff">Z</text>
          <text x="97" y="1148" fill="#e02020">X</text>
          <text x="-6" y="1148" fill="#20b020">Y</text>
        </g>
      </svg>
      <div className="relative flex items-start justify-between pt-[7px] pr-2.5 text-[17px] leading-[24px] text-[#f0f0f0]">
        <div className="flex">
          <button>[−]</button>
          <button>[SW Isometric]</button>
          <button>[Shaded with edges]</button>
        </div>
        <div className="flex gap-[14px] pt-1">
          <button aria-label="Minimize drawing">
            <Svg w={16} h={17}>
              <path d="M0 12h15v4H0z" fill="#f4f4f4" />
            </Svg>
          </button>
          <button aria-label="Restore drawing">
            <Svg w={16} h={17}>
              <path d="M5 3V1h10v10h-2" stroke="#f4f4f4" strokeWidth="2" />
              <path d="M2 5h9v9H2z" stroke="#f4f4f4" strokeWidth="4" />
            </Svg>
          </button>
          <button aria-label="Close drawing">
            <Svg w={16} h={17}>
              <path d="M3 2l9 12M12 2L3 14" stroke="#f4f4f4" strokeWidth="3.500" />
              <path d="M1 2h5M9 2h5M1 14h5M9 14h5" stroke="#f4f4f4" strokeWidth="2" />
            </Svg>
          </button>
        </div>
      </div>
      <button className="absolute top-[266px] right-[77px] flex h-[26px] w-[70px] items-center justify-between rounded-md border-2 border-[#83859a] bg-[#9d9fae] px-1.5 font-[Liberation_Sans] text-[15px] text-[#4b4e5a]">
        WCS
        <Svg w={12} h={8}>
          <path d="M.500.500h11L6 6.500z" fill="#b5b7c4" stroke="#868897" />
        </Svg>
      </button>
    </main>
  );
}

/* ---------- command line ---------- */

function CommandLine() {
  return (
    <section className="flex border-t-4 border-b-4 border-[#3b4453] bg-[#2e3440]">
      <div className="flex w-[35px] shrink-0 flex-col items-center pr-1">
        <Svg w={26} h={8}>
          <path d="M0 7h26" stroke={W} strokeWidth="2" strokeDasharray="2 2.500" />
        </Svg>
        <button aria-label="Close command line" className="mt-[19px]">
          <CloseX c={W} />
        </button>
        <button aria-label="Customize command line" className="mt-3">
          <Svg w={24} h={24}>
            <path d="M3 21L15 9" stroke={W} strokeWidth="4" strokeLinecap="round" />
            <path d="M21 3a6 6 0 1 0 2 6l-4 2-3-3z" fill={W} />
          </Svg>
        </button>
      </div>
      <div className="flex-1 border-2 border-r-0 border-[#70757e] font-[DejaVu_Sans_Mono,monospace] text-[18px]">
        <div className="flex h-[63px] flex-col justify-end bg-[#c8c8c8] pb-[2px] pl-0.5 leading-[23px] text-black">
          <div>Command: _vscurrent</div>
          <div className="truncate">Enter an option [2dwireframe/Wireframe/Hidden/Realistic/Conceptual/Shaded/shaded with Edges/shades of Gray/SKetchy/X-ray/Other] &lt;Shaded&gt;: _e</div>
        </div>
        <div className="flex h-[30px] items-center border-t-2 border-[#2a303a] bg-white pl-1">
          <button aria-label="Recent commands" className="flex items-center gap-1">
            <Svg w={24} h={18}>
              <path d="M.750.750h22.500v16.500H.750z" fill="#fff" stroke="#555" strokeWidth="1.500" />
              <path d="M1 1h22v4H1z" fill="#666" />
              <path d="M3 7l4 3-4 3M8 13h5" stroke="#555" />
            </Svg>
            <Svg w={11} h={7}>
              <path d="M0 0h11L5.500 6z" fill="#555" />
            </Svg>
          </button>
          <input aria-label="Command" placeholder="Type a command" className="ml-2.5 h-[26px] flex-1 italic outline-none placeholder:text-[#7a7a7a]" />
        </div>
      </div>
    </section>
  );
}

/* ---------- status bar ---------- */

function Group({ className = "", children }: Kids & { className?: string }) {
  return <div className={`flex h-9 items-center justify-around bg-[#3b4453] ${className}`}>{children}</div>;
}
function Tool({ label, on = false, className = "w-[34px]", children }: Kids & { label: string; on?: boolean; className?: string }) {
  return (
    <button aria-label={label} className={`flex h-[34px] shrink-0 items-center justify-center ${on ? "bg-[#5b8ec4]" : ""} ${className}`}>
      {children}
    </button>
  );
}
const People = ({ extra }: { extra?: React.ReactNode }) => (
  <Svg>
    <path d="M11 0l3 9 1 6 6 9-5-2-5-5-5 5-5 2 6-9 1-6z" fill={W} />
    {extra}
  </Svg>
);

function LayoutTab({ name, className, active = false }: { name: string; className: string; active?: boolean }) {
  return (
    <button className={`relative h-[25px] text-[17px] leading-[22px] ${active ? "font-bold text-white" : "text-[#b0b3b9]"} ${className}`}>
      <svg viewBox="0 0 100 25" preserveAspectRatio="none" className="absolute inset-0 h-full w-full" aria-hidden="true">
        <path d="M0 0C9 1 8 8 11 16C13 23 14 25 19 25H81C86 25 87 23 89 16C92 8 91 1 100 0z" fill={active ? "#3b4453" : "#2d3440"} />
      </svg>
      <span className="relative">{name}</span>
    </button>
  );
}

function StatusBar() {
  return (
    <footer className="flex h-[39px] items-start justify-between bg-[#222933] text-[17px] text-[#e8e8e8]">
      <div className="flex pl-3">
        <LayoutTab name="Model" active className="w-[97px]" />
        <LayoutTab name="Layout1" className="-ml-1.5 w-[100px]" />
        <LayoutTab name="Layout2" className="-ml-1 w-[101px]" />
        <button aria-label="New layout" className="ml-2 flex h-[22px] w-8 items-center justify-center rounded-tl-2xl rounded-br-2xl bg-[#2d3440]">
          <Svg w={12} h={12}>
            <path d="M6 0v12M0 6h12" stroke="#a9acb2" strokeWidth="3" />
          </Svg>
        </button>
      </div>
      <div className="flex gap-1">
        <Group className="mr-0.5 w-[72px]">
          <button className="text-[17px]">MODEL</button>
        </Group>
        <Group className="mr-0.5 w-24">
          <Tool label="Grid">
            <Svg>
              <path d="M6 0v24M12 0v24M18 0v24M0 6h24M0 12h24M0 18h24" stroke={W} strokeWidth="1.300" />
            </Svg>
          </Tool>
          <Tool label="Snap">
            <Svg>
              <path d="M3 4h18M3 12h18M3 20h18" stroke={W} strokeWidth="3" strokeDasharray="3 4.500" />
            </Svg>
          </Tool>
          <Tool label="Snap options" className="w-5">
            <CaretLg />
          </Tool>
        </Group>
        <Group className="-mr-0.5 w-9">
          <Tool label="Dynamic input">
            <Svg>
              <path d="M5 0v11M0 5h11" stroke={W} strokeWidth="1.500" />
              <path d="M9 13h15v7H9z" fill={W} />
              <path d="M11 15v3" stroke="#3b4453" />
            </Svg>
          </Tool>
        </Group>
        <Group className="-mr-0.5 w-[156px]">
          <Tool label="Ortho">
            <Svg>
              <path d="M2 1v22h22M2 16h6v7" stroke={W} strokeWidth="1.500" />
            </Svg>
          </Tool>
          <Tool label="Polar">
            <Svg>
              <circle cx="10" cy="13" r="9" stroke={W} strokeWidth="1.500" />
              <path d="M10 13h14M10 13l8-8" stroke={W} strokeWidth="1.500" />
            </Svg>
          </Tool>
          <Tool label="Polar options" className="w-5">
            <CaretLg />
          </Tool>
          <Tool label="Isometric drafting">
            <Svg>
              <path d="M12 0v24" stroke="#3fae5a" strokeWidth="1.500" />
              <path d="M3 3l18 19" stroke="#d65a5a" strokeWidth="1.500" />
              <path d="M10 9h4v4h-4z" fill="#3b4453" stroke={W} />
            </Svg>
          </Tool>
          <Tool label="Isometric options" className="w-5">
            <CaretLg />
          </Tool>
        </Group>
        <Group className="mr-[3px] w-[97px]">
          <Tool label="Object tracking">
            <Svg>
              <path d="M22 2L2 22h22" stroke={W} strokeWidth="1.500" />
              <path d="M9 11h5v5H9z" fill={W} />
            </Svg>
          </Tool>
          <Tool label="Object snap" on>
            <Svg>
              <path d="M4 3h20v20H4z" stroke="#fff" strokeWidth="1.500" />
              <path d="M1 1h6v6H1z" fill="#5b8ec4" stroke="#fff" strokeWidth="1.500" />
            </Svg>
          </Tool>
          <Tool label="Snap settings" className="w-5">
            <CaretLg />
          </Tool>
        </Group>
        <Group className="mr-0.5 w-[157px] pr-1">
          <Tool label="Annotation visibility" on>
            <People extra={<circle cx="19" cy="5" r="4" stroke="#fff" strokeWidth="1.500" />} />
          </Tool>
          <Tool label="Auto scale">
            <People extra={<path d="M20 0l-5 7h4l-3 6 8-8h-4l3-5z" fill={W} />} />
          </Tool>
          <Tool label="Annotation scale">
            <People />
          </Tool>
          <button className="flex items-center gap-1.5 text-[16px]">
            1:1
            <CaretLg />
          </button>
        </Group>
        <Group className="-mr-0.5 w-[60px]">
          <Tool label="Workspace">
            <Svg>
              <circle cx="12" cy="12" r="6.500" stroke={W} strokeWidth="5" />
              <circle cx="12" cy="12" r="10.500" stroke={W} strokeWidth="3.500" strokeDasharray="4 4.250" />
            </Svg>
          </Tool>
          <Tool label="Workspace options" className="w-4">
            <CaretLg />
          </Tool>
        </Group>
        <Group className="mr-0.5 w-9">
          <Tool label="Annotation monitor">
            <Svg>
              <path d="M12 1v22M1 12h22" stroke={W} strokeWidth="3" />
            </Svg>
          </Tool>
        </Group>
        <Group className="w-9">
          <Tool label="Isolate objects">
            <Svg>
              <path d="M1 1h9v11H1zM5 24l5-9 5 9z" stroke={W} strokeWidth="1.300" />
              <circle cx="19" cy="12" r="5" stroke={W} strokeWidth="1.300" />
            </Svg>
          </Tool>
        </Group>
        <Group className="w-11">
          <Tool label="Graphics performance">
            <Svg>
              <path d="M0 0h23v22H0z" fill={W} />
              <path d="M1 15l7-10 6 9 8-11" stroke="#555" strokeWidth="1.500" />
              <path d="M6 3h4v4H6z" fill={B} />
              <path d="M17 11l8 13H11z" fill="#f6a45c" />
              <path d="M17 15v5M17 21v2" stroke="#fff" strokeWidth="2" />
            </Svg>
          </Tool>
        </Group>
        <Group className="w-[72px]">
          <Tool label="Clean screen">
            <Svg>
              <path d="M1 3h22v18H1z" stroke={W} strokeWidth="1.500" />
              <path d="M13 11l6-5M11 13l-6 5" stroke={W} />
              <path d="M20 5v5l-5-5zM4 19v-5l5 5z" fill={W} />
            </Svg>
          </Tool>
          <Tool label="Customization">
            <Svg>
              <path d="M0 3h24M0 12h24M0 21h24" stroke={W} strokeWidth="3" />
            </Svg>
          </Tool>
        </Group>
      </div>
    </footer>
  );
}

/* ---------- taskbar ---------- */

function TaskApp({ label, running = false, children }: Kids & { label: string; running?: boolean }) {
  return (
    <button aria-label={label} className="relative flex w-[75px] shrink-0 items-center justify-center">
      {children}
      {running && <span className="absolute inset-x-[7px] bottom-0 h-[3px] bg-[#0078d7]" />}
    </button>
  );
}

function Leaf({ r, s = 1, c }: { r: number; s?: number; c: string }) {
  return (
    <g transform={`rotate(${r}) scale(${s})`}>
      <path d="M0 0C-10-6-15-16-9-21C-5-25-1-22 0-19C1-22 5-25 9-21C15-16 10-6 0 0z" fill={c} />
      <path d="M0 0v-14" stroke="#8fd04a" strokeWidth="1" />
    </g>
  );
}

function Clover() {
  return (
    <svg width="90" height="56" viewBox="0 0 90 56" fill="none" className="mt-0.5 block" aria-hidden="true">
      <path d="M30 26c8 8 12 18 13 30M64 24c-12 6-20 16-20 32" stroke="#8a9a20" strokeWidth="2.500" />
      <g transform="translate(23 22)">
        <Leaf r={0} s={0.95} c="#4f9a20" />
        <Leaf r={75} c="#67ad2c" />
        <Leaf r={165} s={1.25} c="#47901c" />
        <Leaf r={265} c="#6db532" />
      </g>
      <g transform="translate(65 22)">
        <Leaf r={-5} s={0.75} c="#63aa2a" />
        <Leaf r={85} s={1} c="#7abd3a" />
        <Leaf r={180} s={1} c="#4f9a20" />
        <Leaf r={270} s={0.85} c="#5fa52a" />
      </g>
    </svg>
  );
}

const Shield = () => (
  <Svg w={34} h={34}>
    <path d="M17 0a17 17 0 0 1 17 17c0 4-2 8-4 10C31 12 20 4 6 4a17 17 0 0 1 11-4z" fill="#7b3ff2" />
    <path d="M6 4A17 17 0 0 0 14 34C6 26 6 12 12 4z" fill="#ff7a1a" />
    <path d="M31 16c2 8-6 19-17 18-6-3-7-8-8-12 8 8 20 4 25-6z" fill="#f7c21a" />
    <path d="M17 8l9 3c0 9-3 14-9 17-6-3-9-8-9-17z" fill="#fff" />
    <circle cx="17" cy="16" r="2.500" fill="#2b2d42" />
    <path d="M15.500 17h3v6h-3z" fill="#2b2d42" />
  </Svg>
);

function Taskbar() {
  return (
    <div className="flex h-[60px] bg-[linear-gradient(90deg,#d7d7da_0%,#d8d4d6_4%,#e2d8da_24%,#e1d7da_40%,#d5dae3_48%,#d8d9df_54%,#dcd9d8_58%,#e7dad5_64%,#e3dbda_72%,#e4dad4_82%,#e3e1dc_88%,#e0e7e1_92%,#e0e8e2_100%)] text-black">
      <button aria-label="Start" className="flex w-[72px] shrink-0 items-center justify-center">
        <Svg>
          <path d="M0 3.500L10 2v9.500H0zM11 1.800L24 0v11.500H11zM0 12.500h10V22L0 20.500zM11 12.500h13V24l-13-1.800z" fill="#000" />
        </Svg>
      </button>
      <label className="flex h-[59px] w-[432px] shrink-0 items-center border-2 border-[#cbcbcb] bg-white pr-[15px] pl-4">
        <Svg w={26} h={26}>
          <circle cx="16" cy="9" r="8" stroke="#222" strokeWidth="2" />
          <path d="M10 15L1 25" stroke="#222" strokeWidth="2" />
        </Svg>
        <input aria-label="Search" placeholder="Procurar" className="ml-[16px] w-0 flex-1 text-[21px] outline-none placeholder:text-[#333]" />
        <Clover />
      </label>
      <div className="-ml-0.5 flex">
        <TaskApp label="Task view">
          <Svg>
            <path d="M1 0v3h15V0M1 7h15v10H1zM1 24v-3h15v3" stroke="#000" strokeWidth="1.500" />
            <path d="M22.500 0v6M22.500 12v12" stroke="#000" strokeWidth="1.500" />
            <path d="M21 7h3v3h-3z" fill="#000" />
          </Svg>
        </TaskApp>
        <TaskApp label="Mail">
          <Svg w={37} h={34}>
            <path d="M0 10L18.500 0 37 10v4L18.500 24 0 14z" fill="#0f5cad" />
            <path d="M3 10h31v10L18.500 28 3 16z" fill="#f4f4f4" />
            <path d="M0 11l37 23H0z" fill="#1f9fe8" />
            <path d="M37 11v23L18.500 22z" fill="#3ccdf5" />
            <path d="M0 34l18.500-12L37 34z" fill="#1795e4" />
          </Svg>
        </TaskApp>
        <TaskApp label="Store">
          <Svg w={35} h={35}>
            <path d="M9 5V1h17v4" stroke="#3ec5f2" strokeWidth="2.500" />
            <path d="M0 5h35v26a4 4 0 0 1-4 4H4a4 4 0 0 1-4-4z" fill="#124f8f" />
            <path d="M10 12h7v7h-7z" fill="#f25022" />
            <path d="M18 12h7v7h-7z" fill="#7fba00" />
            <path d="M10 20h7v7h-7z" fill="#00a4ef" />
            <path d="M18 20h7v7h-7z" fill="#ffb900" />
          </Svg>
        </TaskApp>
        <TaskApp label="Edge">
          <Svg w={36} h={36}>
            <defs>
              <linearGradient id="edgeTop" x1="0" y1="0" x2="1" y2=".4">
                <stop stopColor="#1f9fd6" />
                <stop offset=".5" stopColor="#2fc2c8" />
                <stop offset="1" stopColor="#62d94f" />
              </linearGradient>
              <linearGradient id="edgeBody" x1="0" y1="0" x2="0" y2="1">
                <stop stopColor="#1a94dc" />
                <stop offset="1" stopColor="#0f6fc4" />
              </linearGradient>
            </defs>
            <path d="M0 16A18 18 0 0 1 36 17c0 6-4 8-9 8-4 0-6-2-4-5 2-5-1-11-8-12C8 7 2 11 0 16z" fill="url(#edgeTop)" />
            <path d="M0 18c0-6 8-11 16-9 6 1 9 6 8 10-3-4-9-3-9 4 0 6 5 11 11 11A18 18 0 0 1 0 18z" fill="url(#edgeBody)" />
            <path d="M11 22c1 7 8 10 14 9 4-1 7-3 8-3-3 6-9 8-15 8-6-1-9-8-7-14z" fill="#0c4f96" />
          </Svg>
        </TaskApp>
        <TaskApp label="Microsoft 365">
          <Svg w={32} h={34}>
            <defs>
              <linearGradient id="m365a" x1="0" y1="0" x2="0" y2="1">
                <stop stopColor="#a583e0" />
                <stop offset="1" stopColor="#2b5cc0" />
              </linearGradient>
              <linearGradient id="m365b" x1="0" y1="0" x2="1" y2="1">
                <stop stopColor="#2c6ed0" />
                <stop offset="1" stopColor="#4cc4f5" />
              </linearGradient>
              <linearGradient id="m365c" x1="0" y1="1" x2="1" y2="0">
                <stop stopColor="#c08cf0" />
                <stop offset="1" stopColor="#5b3a9e" />
              </linearGradient>
            </defs>
            <path d="M14 0L2 7a4 4 0 0 0-2 3v15l8 3 4-3V13l4-4z" fill="url(#m365a)" />
            <path d="M14 0h4l12 7a4 4 0 0 1 2 3v14l-10-6v-5l-8-5z" fill="url(#m365b)" />
            <path d="M32 23l-2 4-12 7h-4L2 27l10-1 10-8z" fill="url(#m365c)" />
          </Svg>
        </TaskApp>
        <TaskApp label="Zoom">
          <span className="flex h-9 w-9 items-center justify-center rounded-full bg-[#0b5cff] text-[11px] font-semibold text-white">zoom</span>
        </TaskApp>
        <TaskApp label="File Explorer" running>
          <Svg w={34} h={28}>
            <path d="M1 0h11l3 4h-14z" fill="#e09c0c" />
            <path d="M0 3h32a2 2 0 0 1 2 2v21H0z" fill="#ffd257" />
            <path d="M5 27V16a2 2 0 0 1 2-2h20v13h-5v-6H12v6z" fill="#3c9bdc" />
          </Svg>
        </TaskApp>
        <TaskApp label="Chrome" running>
          <Svg w={38} h={38}>
            <circle cx="18" cy="17" r="17" fill="#f8c51c" />
            <path d="M3 9a17 17 0 0 1 30 0H18z" fill="#e33b2e" />
            <path d="M3 8a17 17 0 0 0 14 26l5-12-12-4z" fill="#2e9c4f" />
            <path d="M18 9H3l8 12z" fill="#e33b2e" />
            <circle cx="17" cy="17" r="9" fill="#fff" />
            <circle cx="17" cy="17" r="7" fill="#3b7ded" />
            <circle cx="27" cy="26" r="12" fill="#8c7a6c" />
            <path d="M20 18c5-5 12-4 15 2l-2 13-6 5-5-4z" fill="#75655a" />
            <circle cx="27" cy="24" r="5" fill="#b09a88" />
            <path d="M25 30h4v8h-4z" fill="#2e2825" />
          </Svg>
        </TaskApp>
        <button aria-label="AutoCAD" className="relative mr-[2px] ml-1 flex w-[73px] shrink-0 items-center border-r-[5px] border-[#dcdcde] bg-[#f2f2f3] pl-[17px]">
          <span className="flex h-9 w-9 items-center justify-center bg-[#fbe9e3]">
            <Svg w={26} h={28}>
              <path d="M9 1h8l9 26h-6l-2-5-11 2-1 3H0z" fill="#c9202a" />
              <path d="M12 7l-4 12 8-2z" fill="#fbe9e3" />
              <path d="M9 1l3 6-6 20H0z" fill="#8f1820" />
            </Svg>
          </span>
          <span className="absolute inset-x-0 bottom-0 h-[3px] bg-[#0078d7]" />
        </button>
        <TaskApp label="Word">
          <div className="relative">
            <Svg w={36} h={34}>
              <path d="M8 0h26a2 2 0 0 1 2 2v7H8z" fill="#41a5ee" />
              <path d="M8 8h28v8H8z" fill="#2b7cd3" />
              <path d="M8 16h28v8H8z" fill="#185abd" />
              <path d="M8 24h28v7a2 2 0 0 1-2 2H8z" fill="#103f91" />
              <rect x="0" y="8" width="18" height="18" rx="2" fill="#1a5dbe" />
            </Svg>
            <span className="absolute top-2 left-0 w-[18px] text-center text-[14px] leading-[18px] font-bold text-white">W</span>
          </div>
        </TaskApp>
        <TaskApp label="Secure browser">
          <Shield />
        </TaskApp>
      </div>
      <div className="ml-auto flex shrink-0 items-center text-[20px]">
        <button className="flex items-center">
          <Svg w={36} h={34}>
            <path d="M15 0a12 12 0 1 1-14 18c8 2 16-6 14-18z" fill="#f5a623" />
            <path d="M8 34a8 8 0 0 1 0-15 11 11 0 0 1 20-1 8 8 0 0 1 1 16z" fill="#8fb9f2" />
            <path d="M8 32a7 7 0 0 1-5-6h29c0 4-2 6-5 6z" fill="#6a9fe8" />
          </Svg>
          <span className="ml-3 whitespace-pre">13°C</span>
          <span className="ml-2.5 w-[140px] text-left">Ger. Nublado</span>
        </button>
        <button aria-label="Volume">
          <Svg w={16} h={20}>
            <path d="M1 7q2 3 0 6M4 4q5 6 0 12M7 1q8 9 0 18" stroke="#333" strokeWidth="1.300" />
          </Svg>
        </button>
        <button aria-label="Network" className="ml-[22px]">
          <Svg w={20} h={20}>
            <path d="M1 19A18 18 0 0 1 19 1M6 19A13 13 0 0 1 19 6M11 19a8 8 0 0 1 8-8" stroke="#333" strokeWidth="1.500" />
            <circle cx="17" cy="17" r="2" fill="#222" />
          </Svg>
        </button>
        <button aria-label="Battery" className="ml-[26px]">
          <Svg w={23} h={14}>
            <path d="M1 1h19v12H1z" stroke="#000" strokeWidth="1.500" />
            <path d="M3 3h9v8H3zM21 4h2v5h-2z" fill="#000" />
          </Svg>
        </button>
        <button className="ml-3 w-[116px] text-center text-[17px] leading-[28px]">
          23:23
          <br />
          17/03/2023
        </button>
        <button aria-label="Antivirus" className="relative ml-[17px] h-9 w-[50px]">
          <Svg w={36} h={30}>
            <path d="M0 28V2l6 6v20zM10 28V8l8 9 12-16v27h-6V12l-6 9-4-4v11zM32 2h3v26h-3z" fill="#fff" />
          </Svg>
          <span className="absolute right-2 bottom-0 flex h-[18px] w-[18px] items-center justify-center rounded-full bg-[#555] text-[12px] text-white">3</span>
        </button>
        <button aria-label="Notifications" className="relative mr-[26px] ml-[20px] h-9 w-9">
          <Svg w={25} h={24}>
            <path d="M0 0h24v20h-8v5l-6-5H0z" fill="#000" />
            <path d="M4 5h16M4 10h16M4 15h10" stroke="#fff" strokeWidth="1.500" />
          </Svg>
          <span className="absolute right-0 bottom-0 flex h-[25px] w-[25px] items-center justify-center rounded-full border border-[#777] bg-[#dcdedc] text-[15px] font-semibold">3</span>
        </button>
      </div>
    </div>
  );
}

export default function App() {
  return (
    <div className="relative flex min-h-screen flex-col overflow-hidden bg-[#222933] font-['Open_Sans',sans-serif]">
      <TitleBar />
      <RibbonTabs />
      <Ribbon />
      <FileTabs />
      <Viewport />
      <CommandLine />
      <StatusBar />
      <Taskbar />
      <Balloon />
    </div>
  );
}
